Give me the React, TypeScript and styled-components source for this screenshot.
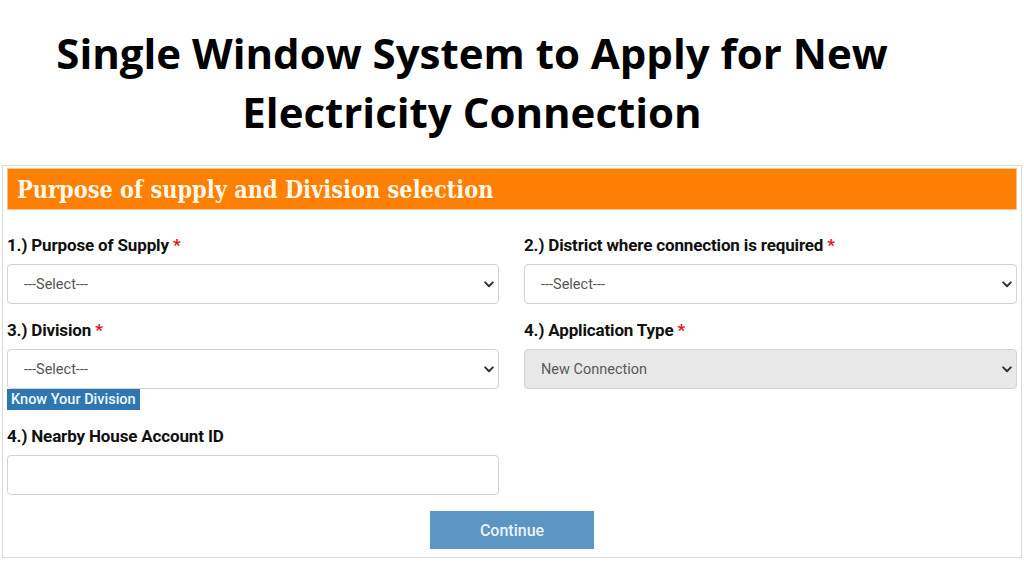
import styled, { createGlobalStyle } from 'styled-components';

const GlobalStyle = createGlobalStyle`
  html, body {
    margin: 0;
    padding: 0;
    background: #ffffff;
  }
  * {
    box-sizing: border-box;
  }
`;

const Chevron = () => (
  <svg width="10" height="7" viewBox="0 0 10 7" fill="none">
    <path d="M1.2 1.4 5 5.2 8.8 1.4" stroke="#333" strokeWidth="2" strokeLinecap="round" strokeLinejoin="round" />
  </svg>
);

type Field = {
  label: string;
  required?: boolean;
};

const FieldLabel = ({ label, required }: Field) => (
  <Label>
    {label}
    {required && <Star> *</Star>}
  </Label>
);

const SelectBox = ({ value, disabled }: { value: string; disabled?: boolean }) => (
  <SelectWrap>
    <Select disabled={disabled} defaultValue={value}>
      <option>{value}</option>
    </Select>
    <Arrow>
      <Chevron />
    </Arrow>
  </SelectWrap>
);

const App = () => {
  return (
    <>
      <GlobalStyle />
      <Page>
        <Title>
          Single Window System to Apply for New
          <br />
          Electricity Connection
        </Title>
        <Panel>
          <Header>Purpose of supply and Division selection</Header>
          <Form>
            <FieldBox>
              <FieldLabel label="1.) Purpose of Supply" required />
              <SelectBox value="---Select---" />
            </FieldBox>
            <FieldBox>
              <FieldLabel label="2.) District where connection is required" required />
              <SelectBox value="---Select---" />
            </FieldBox>
            <FieldBox>
              <FieldLabel label="3.) Division" required />
              <SelectBox value="---Select---" />
              <KnowButton type="button">Know Your Division</KnowButton>
            </FieldBox>
            <FieldBox>
              <FieldLabel label="4.) Application Type" required />
              <SelectBox value="New Connection" disabled />
            </FieldBox>
            <FieldBox>
              <FieldLabel label="4.) Nearby House Account ID" />
              <Input type="text" />
            </FieldBox>
          </Form>
          <Actions>
            <ContinueButton type="button">Continue</ContinueButton>
          </Actions>
        </Panel>
      </Page>
    </>
  );
};

export default App;

const Page = styled.div`
  width: 1024px;
  height: 576px;
  overflow: hidden;
  padding-top: 23px;
`;

const Title = styled.h1`
  margin: 0;
  padding-right: 80px;
  font-family: 'Open Sans', Lato, sans-serif;
  font-weight: 700;
  font-size: 42px;
  line-height: 59px;
  text-align: center;
  color: #000;
`;

const Panel = styled.div`
  margin: 24px 2px 0;
  border: 1px solid #d9d9d9;
  padding: 2px 4px 8px;
`;

const Header = styled.div`
  height: 42px;
  background: #fd7f04;
  border: 1px solid #f6c68a;
  padding-left: 9px;
  display: flex;
  align-items: center;
  font-family: 'DejaVu Serif', 'Liberation Serif', serif;
  font-stretch: condensed;
  font-weight: 700;
  font-size: 23.3px;
  color: #fff6e4;
`;

const Form = styled.div`
  display: grid;
  grid-template-columns: 492px 493px;
  column-gap: 25px;
  align-items: start;
  padding-top: 9px;
`;

const FieldBox = styled.div`
  display: flex;
  flex-direction: column;
`;

const Label = styled.div`
  margin: 16px 0 9px;
  font-family: Roboto, 'Liberation Sans', sans-serif;
  font-weight: 700;
  font-size: 17px;
  line-height: 20px;
  letter-spacing: -0.15px;
  color: #111;
`;

const Star = styled.span`
  color: #e3141b;
`;

const SelectWrap = styled.div`
  position: relative;
`;

const Select = styled.select`
  appearance: none;
  display: block;
  width: 100%;
  height: 40px;
  margin: 0;
  padding: 0 30px 0 16px;
  border: 1px solid #d2d2d2;
  border-radius: 4px;
  background: #ffffff;
  font-family: Roboto, 'Liberation Sans', sans-serif;
  font-size: 14.5px;
  color: #555;
  opacity: 1;

  &:disabled {
    background: #e8e8e8;
    color: #5a5a5a;
  }
`;

const Arrow = styled.span`
  position: absolute;
  right: 5px;
  top: 17px;
  display: flex;
  pointer-events: none;
`;

const KnowButton = styled.button`
  align-self: flex-start;
  height: 21px;
  margin: 0;
  padding: 0 4px;
  border: none;
  background: #2f77b3;
  font-family: Roboto, 'Liberation Sans', sans-serif;
  font-weight: 500;
  font-size: 14.5px;
  color: #f2f7fb;
`;

const Input = styled.input`
  display: block;
  width: 100%;
  height: 40px;
  margin: 0;
  border: 1px solid #d2d2d2;
  border-radius: 4px;
  background: #fff;
`;

const Actions = styled.div`
  display: flex;
  justify-content: center;
  padding-top: 16px;
`;

const ContinueButton = styled.button`
  width: 164px;
  height: 38px;
  border: none;
  background: #5b95c3;
  font-family: Roboto, 'Liberation Sans', sans-serif;
  font-weight: 500;
  font-size: 16px;
  color: #eaf2f9;
`;
